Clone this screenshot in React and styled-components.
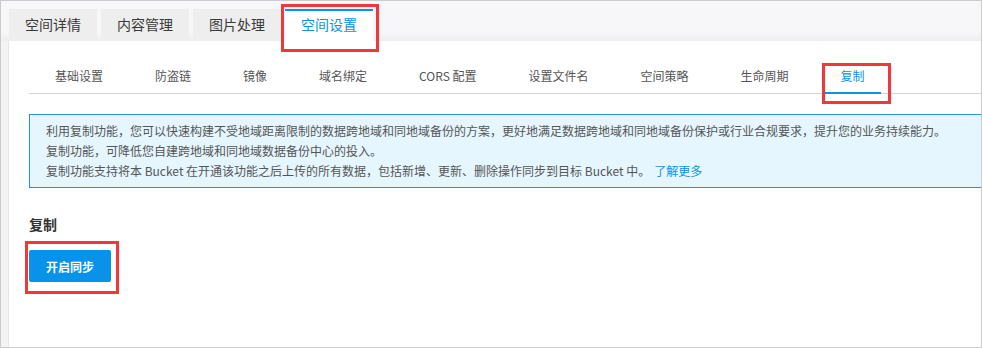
import styled, { createGlobalStyle } from 'styled-components';

const GlobalStyle = createGlobalStyle`
    html, body {
        margin: 0;
        padding: 0;
        background: #ffffff;
    }
    body {
        font-family: "Noto Sans CJK SC", "Liberation Sans", sans-serif;
    }
`;

const mainTabs = ['空间详情', '内容管理', '图片处理', '空间设置'];
const subTabs = ['基础设置', '防盗链', '镜像', '域名绑定', 'CORS 配置', '设置文件名', '空间策略', '生命周期', '复制'];

const Frame = styled.div`
    position: relative;
    box-sizing: border-box;
    width: 982px;
    height: 348px;
    border: 1px solid #cbcbcb;
    background-color: #f3f3f5;
    display: flex;
    flex-direction: column;
    overflow: hidden;
`;

const TopBar = styled.div`
    box-sizing: border-box;
    height: 40px;
    padding: 8px 0 0 8px;
    background: linear-gradient(#f7f7f9 78%, #eeeef1);
    display: flex;
    align-items: flex-end;
`;

const MainTab = styled.div`
    box-sizing: border-box;
    width: 88px;
    height: 32px;
    margin-right: 4px;
    padding-bottom: 4px;
    border-top: 2px solid ${props => props.$active ? '#0a92e6' : 'transparent'};
    background-color: ${props => props.$active ? '#ffffff' : '#eeeeee'};
    color: ${props => props.$active ? '#0a92e6' : '#3a3a3a'};
    font-size: 14px;
    line-height: 26px;
    text-align: center;
`;

const Body = styled.div`
    flex: 1;
    display: flex;
    padding-left: 8px;
`;

const Panel = styled.div`
    flex: 1;
    background-color: #ffffff;
    box-shadow: -1px 0 0 #e6e6e8;
    padding-left: 20px;
    display: flex;
    flex-direction: column;
    align-items: flex-start;
`;

const SubNav = styled.div`
    align-self: stretch;
    margin-top: 18px;
    padding-left: 10px;
    border-bottom: 1px solid #d4d4d4;
    display: flex;
    gap: 20px;
`;

const SubTab = styled.div`
    height: 33px;
    padding: 0 16px;
    margin-bottom: -1px;
    border-bottom: 2px solid ${props => props.$active ? '#0a92e6' : 'transparent'};
    color: ${props => props.$active ? '#0a92e6' : '#555555'};
    font-size: 12px;
    line-height: 34px;
    white-space: nowrap;
`;

const InfoBox = styled.div`
    align-self: stretch;
    margin-top: 20px;
    padding: 6px 16px;
    border: 1px solid #1f94e0;
    border-right: none;
    background-color: #e6f6fe;
    color: #555555;
    font-size: 12px;
    line-height: 20px;
    white-space: nowrap;
`;

const Link = styled.a`
    color: #0a92e6;
    text-decoration: none;
    margin-left: 4px;
`;

const SectionTitle = styled.div`
    margin-top: 26px;
    color: #333333;
    font-size: 14px;
    font-weight: bold;
    line-height: 20px;
`;

const PrimaryButton = styled.button`
    margin-top: 16px;
    width: 82px;
    height: 32px;
    border: none;
    border-radius: 2px;
    background-color: #0892ea;
    color: #ffffff;
    font-family: inherit;
    font-size: 12px;
    font-weight: bold;
    padding: 0;
    cursor: pointer;
`;

// 截图上的红色标注框
const Mark = styled.div`
    position: absolute;
    box-sizing: border-box;
    left: ${props => props.$x}px;
    top: ${props => props.$y}px;
    width: ${props => props.$w}px;
    height: ${props => props.$h}px;
    border: 3px solid #f1373b;
    pointer-events: none;
`;

export default function App() {
    return (
        <>
            <GlobalStyle />
            <Frame>
                <TopBar>
                    {mainTabs.map((name, i) => (
                        <MainTab key={name} $active={i === 3}>{name}</MainTab>
                    ))}
                </TopBar>
                <Body>
                    <Panel>
                        <SubNav>
                            {subTabs.map((name, i) => (
                                <SubTab key={name} $active={i === subTabs.length - 1}>{name}</SubTab>
                            ))}
                        </SubNav>
                        <InfoBox>
                            <div>利用复制功能，您可以快速构建不受地域距离限制的数据跨地域和同地域备份的方案，更好地满足数据跨地域和同地域备份保护或行业合规要求，提升您的业务持续能力。</div>
                            <div>复制功能，可降低您自建跨地域和同地域数据备份中心的投入。</div>
                            <div>复制功能支持将本 Bucket 在开通该功能之后上传的所有数据，包括新增、更新、删除操作同步到目标 Bucket 中。<Link href="#">了解更多</Link></div>
                        </InfoBox>
                        <SectionTitle>复制</SectionTitle>
                        <PrimaryButton>开启同步</PrimaryButton>
                    </Panel>
                </Body>
                <Mark $x={280} $y={3} $w={98} $h={48} />
                <Mark $x={821} $y={62} $w={69} $h={41} />
                <Mark $x={24} $y={240} $w={94} $h={53} />
            </Frame>
        </>
    );
}
